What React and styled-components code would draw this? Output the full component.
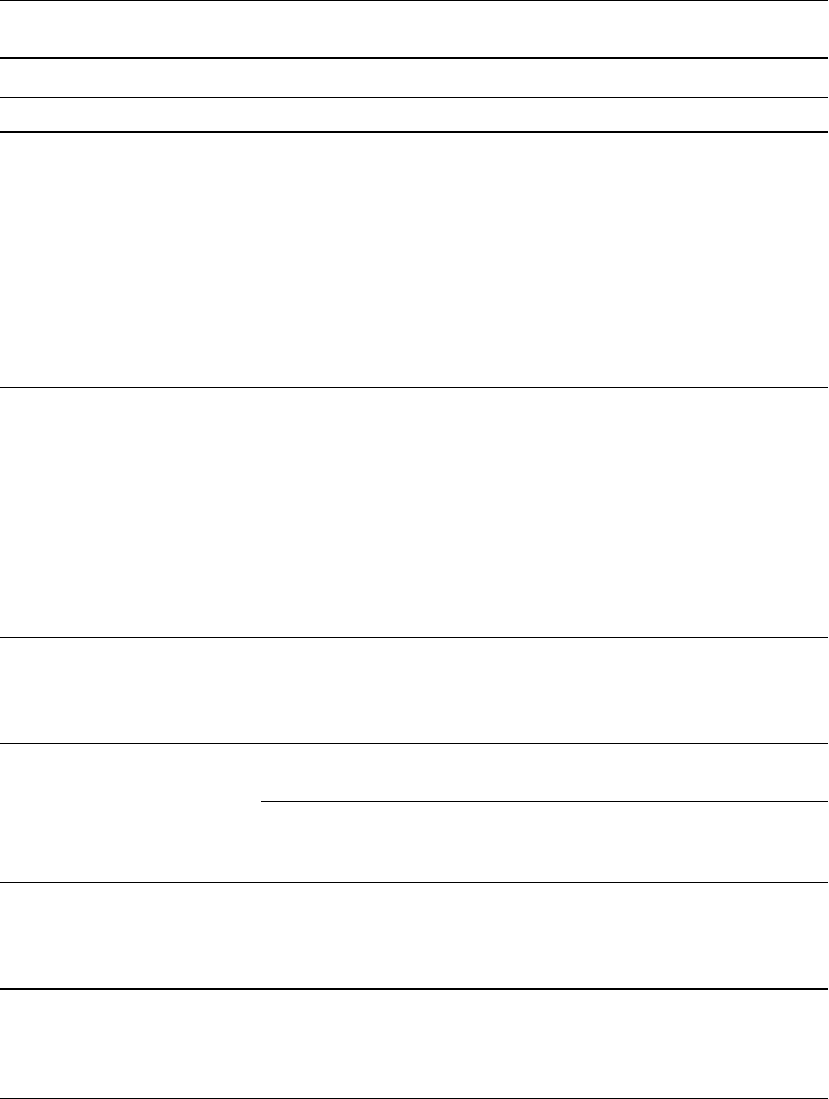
import React from "react";
import styled, { createGlobalStyle } from "styled-components";

const Global = createGlobalStyle`
  html, body {
    margin: 0;
    padding: 0;
    background: #fff;
    font-family: "Liberation Serif", serif;
    color: #000;
  }
`;

export const Table = styled.div`
  width: 828px;
  display: flex;
  flex-direction: column;
  border-top: 1px solid #000;
`;

export const Row = styled.div`
  box-sizing: border-box;
  display: grid;
  grid-template-columns: 261px 1fr;
  height: ${(p) => p.$h}px;
  border-bottom: ${(p) => (p.$thick ? 2 : 1)}px solid #000;
`;

export const Cell = styled.div`
  box-sizing: border-box;
  font-size: 14px;
  padding: 6px 8px;
`;

export const SubColumn = styled.div`
  display: flex;
  flex-direction: column;
`;

export const SubCell = styled.div`
  box-sizing: border-box;
  height: ${(p) => p.$h}px;
  border-bottom: ${(p) => (p.$ruled ? "1px solid #000" : "none")};
`;

const rows = [
  { h: 58, thick: true },
  { h: 39 },
  { h: 35, thick: true },
  { h: 255 },
  { h: 250 },
  { h: 106 },
  { h: 139, split: true },
  { h: 107, thick: true },
  { h: 109 },
];

export default function App() {
  return (
    <>
      <Global />
      <Table>
        {rows.map((r, i) => (
          <Row key={i} $h={r.h} $thick={r.thick}>
            <Cell />
            {r.split ? (
              <SubColumn>
                <SubCell $h={58} $ruled />
                <SubCell $h={80} />
              </SubColumn>
            ) : (
              <Cell />
            )}
          </Row>
        ))}
      </Table>
    </>
  );
}
